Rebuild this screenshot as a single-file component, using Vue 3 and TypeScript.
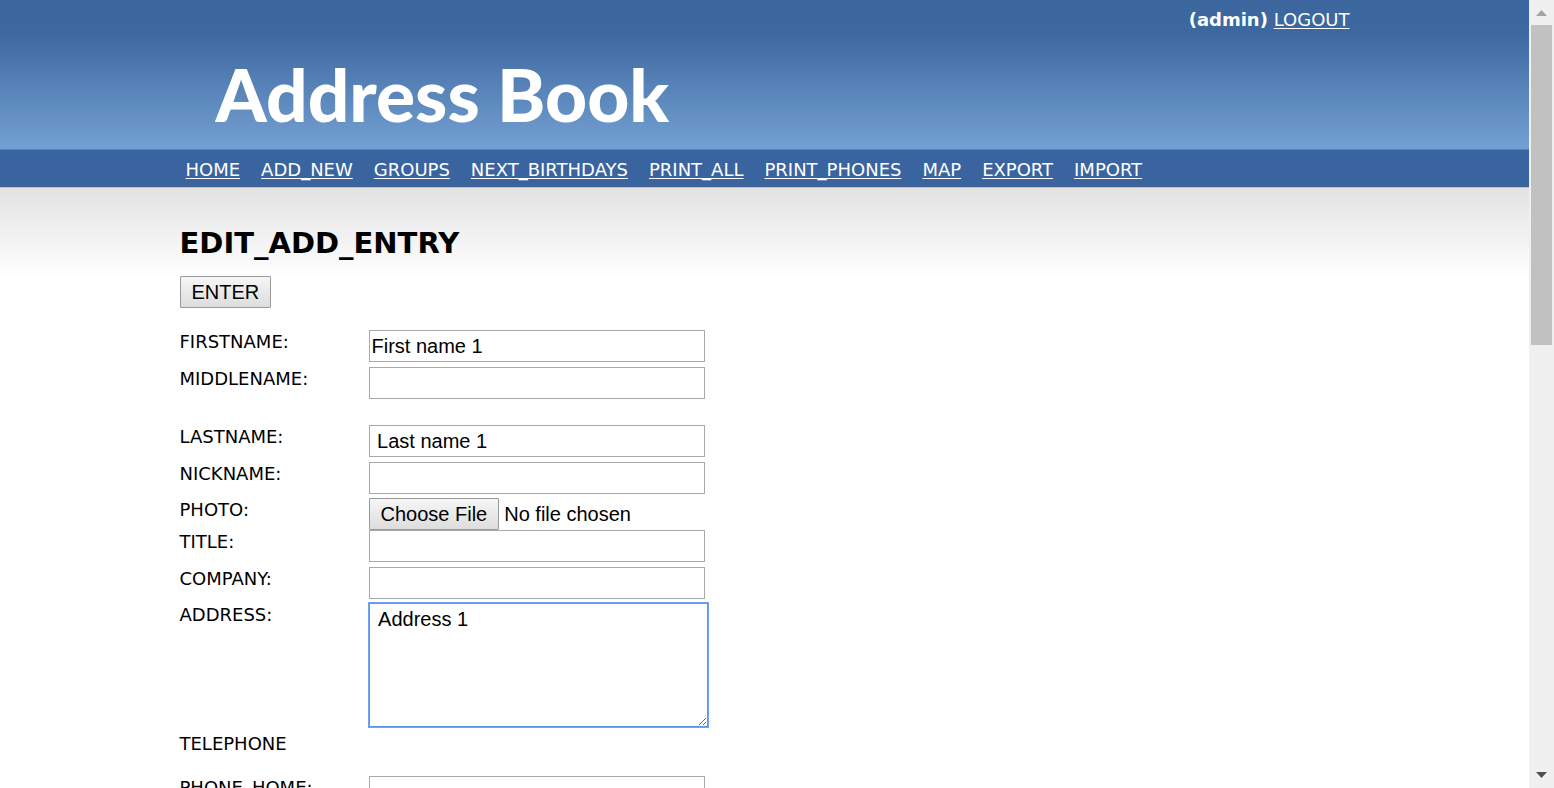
<script setup lang="ts">
import { ref } from 'vue'

interface Field {
  id: string
  label: string
  kind: 'text' | 'file' | 'area' | 'heading'
  value?: string
  spaced?: boolean
}

const navigation: string[] = [
  'HOME', 'ADD_NEW', 'GROUPS', 'NEXT_BIRTHDAYS', 'PRINT_ALL',
  'PRINT_PHONES', 'MAP', 'EXPORT', 'IMPORT',
]

const fields = ref<Field[]>([
  { id: 'firstname', label: 'FIRSTNAME:', kind: 'text', value: 'First name 1' },
  { id: 'middlename', label: 'MIDDLENAME:', kind: 'text', value: '', spaced: true },
  { id: 'lastname', label: 'LASTNAME:', kind: 'text', value: ' Last name 1' },
  { id: 'nickname', label: 'NICKNAME:', kind: 'text', value: '' },
  { id: 'photo', label: 'PHOTO:', kind: 'file' },
  { id: 'title', label: 'TITLE:', kind: 'text', value: '' },
  { id: 'company', label: 'COMPANY:', kind: 'text', value: '' },
  { id: 'address', label: 'ADDRESS:', kind: 'area', value: ' Address 1' },
  { id: 'telephone', label: 'TELEPHONE', kind: 'heading' },
  { id: 'home', label: 'PHONE_HOME:', kind: 'text', value: '' },
])
</script>

<template>
  <div class="viewport">
    <div class="page">
      <header class="banner">
        <div class="wrap">
          <div class="account"><b>(admin)</b> <a href="#logout">LOGOUT</a></div>
          <div class="logo">Address Book</div>
        </div>
      </header>
      <nav class="menu">
        <ul class="wrap">
          <li v-for="item in navigation" :key="item"><a :href="'#' + item.toLowerCase()">{{ item }}</a></li>
        </ul>
      </nav>
      <main class="content">
        <form class="wrap" @submit.prevent>
          <h1>EDIT_ADD_ENTRY</h1>
          <button class="enter" type="submit">ENTER</button>
          <div
            v-for="field in fields"
            :key="field.id"
            class="row"
            :class="[field.kind, { spaced: field.spaced }]"
          >
            <h2 v-if="field.kind === 'heading'">{{ field.label }}</h2>
            <label v-else :for="field.id">{{ field.label }}</label>
            <input v-if="field.kind === 'text'" :id="field.id" v-model="field.value" type="text">
            <input v-else-if="field.kind === 'file'" :id="field.id" type="file">
            <textarea v-else-if="field.kind === 'area'" :id="field.id" v-model="field.value"></textarea>
          </div>
        </form>
      </main>
    </div>
    <div class="scrollbar" aria-hidden="true">
      <svg class="arrow up" viewBox="0 0 25 25"><path d="M7 16 L12.5 10 L18 16 Z" /></svg>
      <div class="track"><div class="thumb"></div></div>
      <svg class="arrow down" viewBox="0 0 25 25"><path d="M7 9 H18 L12.5 15 Z" /></svg>
    </div>
  </div>
</template>

<style>
body {
  margin: 0;
  background: #fff;
}
</style>

<style scoped>
.viewport {
  display: flex;
  height: 100vh;
  overflow: hidden;
  font-family: Verdana, "DejaVu Sans", sans-serif;
  font-size: 18px;
  line-height: 24px;
  color: #000;
}
.page {
  flex: 1;
  min-width: 0;
  overflow: hidden;
}
.wrap {
  box-sizing: border-box;
  max-width: 1170px;
  margin: 0 auto;
}
a {
  color: #fff;
  text-decoration: underline;
  text-decoration-thickness: 1px;
  text-underline-offset: 2px;
  text-decoration-skip-ink: none;
}
.banner {
  padding: 8px 0 10px;
  color: #fff;
  background: linear-gradient(#3c679f 0, #3c679f 30px, #73a0d2 148px);
}
.account {
  text-align: right;
}
.logo {
  padding: 17px 0 0 36px;
  font: 900 73px/90px Lato, sans-serif;
  white-space: nowrap;
}
.menu {
  background: #3a649f;
  border-top: 1px solid #5280b8;
  border-bottom: 1px solid #47638c;
}
.menu ul {
  display: flex;
  flex-wrap: wrap;
  gap: 0 21px;
  padding: 8px 6px 4px;
  list-style: none;
}
.content {
  border-top: 1px solid #b4c2e0;
  background: linear-gradient(#e2e2e2, #fff 90px);
}
h1 {
  margin: 0;
  padding: 39px 0 17px;
  font-size: 29px;
  line-height: 32px;
}
button,
input,
textarea {
  box-sizing: border-box;
  font: 20px/24px Arial, "Liberation Sans", sans-serif;
  color: #000;
}
.enter,
input::file-selector-button {
  box-sizing: border-box;
  height: 32px;
  padding: 0 11px;
  border: 1px solid #999;
  border-radius: 1px;
  background: linear-gradient(#f6f6f6, #ddd);
  font: inherit;
}
.enter {
  display: block;
  margin-bottom: 22px;
  font: 20px/24px Arial, "Liberation Sans", sans-serif;
}
.row {
  display: grid;
  grid-template-columns: 189px 1fr;
  align-items: start;
  margin-bottom: 5px;
}
.row:has(+ .file),
.row:has(+ .area) {
  margin-bottom: 4px;
}
.row.file {
  margin-bottom: 0;
}
.row.spaced {
  margin-bottom: 26px;
}
.row.heading {
  margin-bottom: 20px;
}
h2 {
  margin: 0;
  font-size: 18px;
  font-weight: 400;
  line-height: 24px;
}
input[type="text"] {
  width: 336px;
  height: 32px;
  padding: 1px 2px;
  border: 1px solid #a9a9a9;
  background: #fff;
}
input[type="file"] {
  height: 32px;
}
input::file-selector-button {
  margin-right: 5px;
}
textarea {
  width: 339px;
  height: 124px;
  padding: 3px;
  border: 1px solid #5f94e8;
  background: #fff;
  box-shadow: 0 0 0 1px #6fa3f5;
  outline: none;
  resize: both;
}
.scrollbar {
  display: flex;
  flex: 0 0 25px;
  flex-direction: column;
  background: #f0f0f0;
}
.arrow {
  width: 25px;
  height: 25px;
}
.up {
  fill: #a3a3a3;
}
.down {
  fill: #505050;
}
.track {
  flex: 1;
  padding: 0 2px;
}
.thumb {
  height: 320px;
  background: #c1c1c1;
}
</style>
